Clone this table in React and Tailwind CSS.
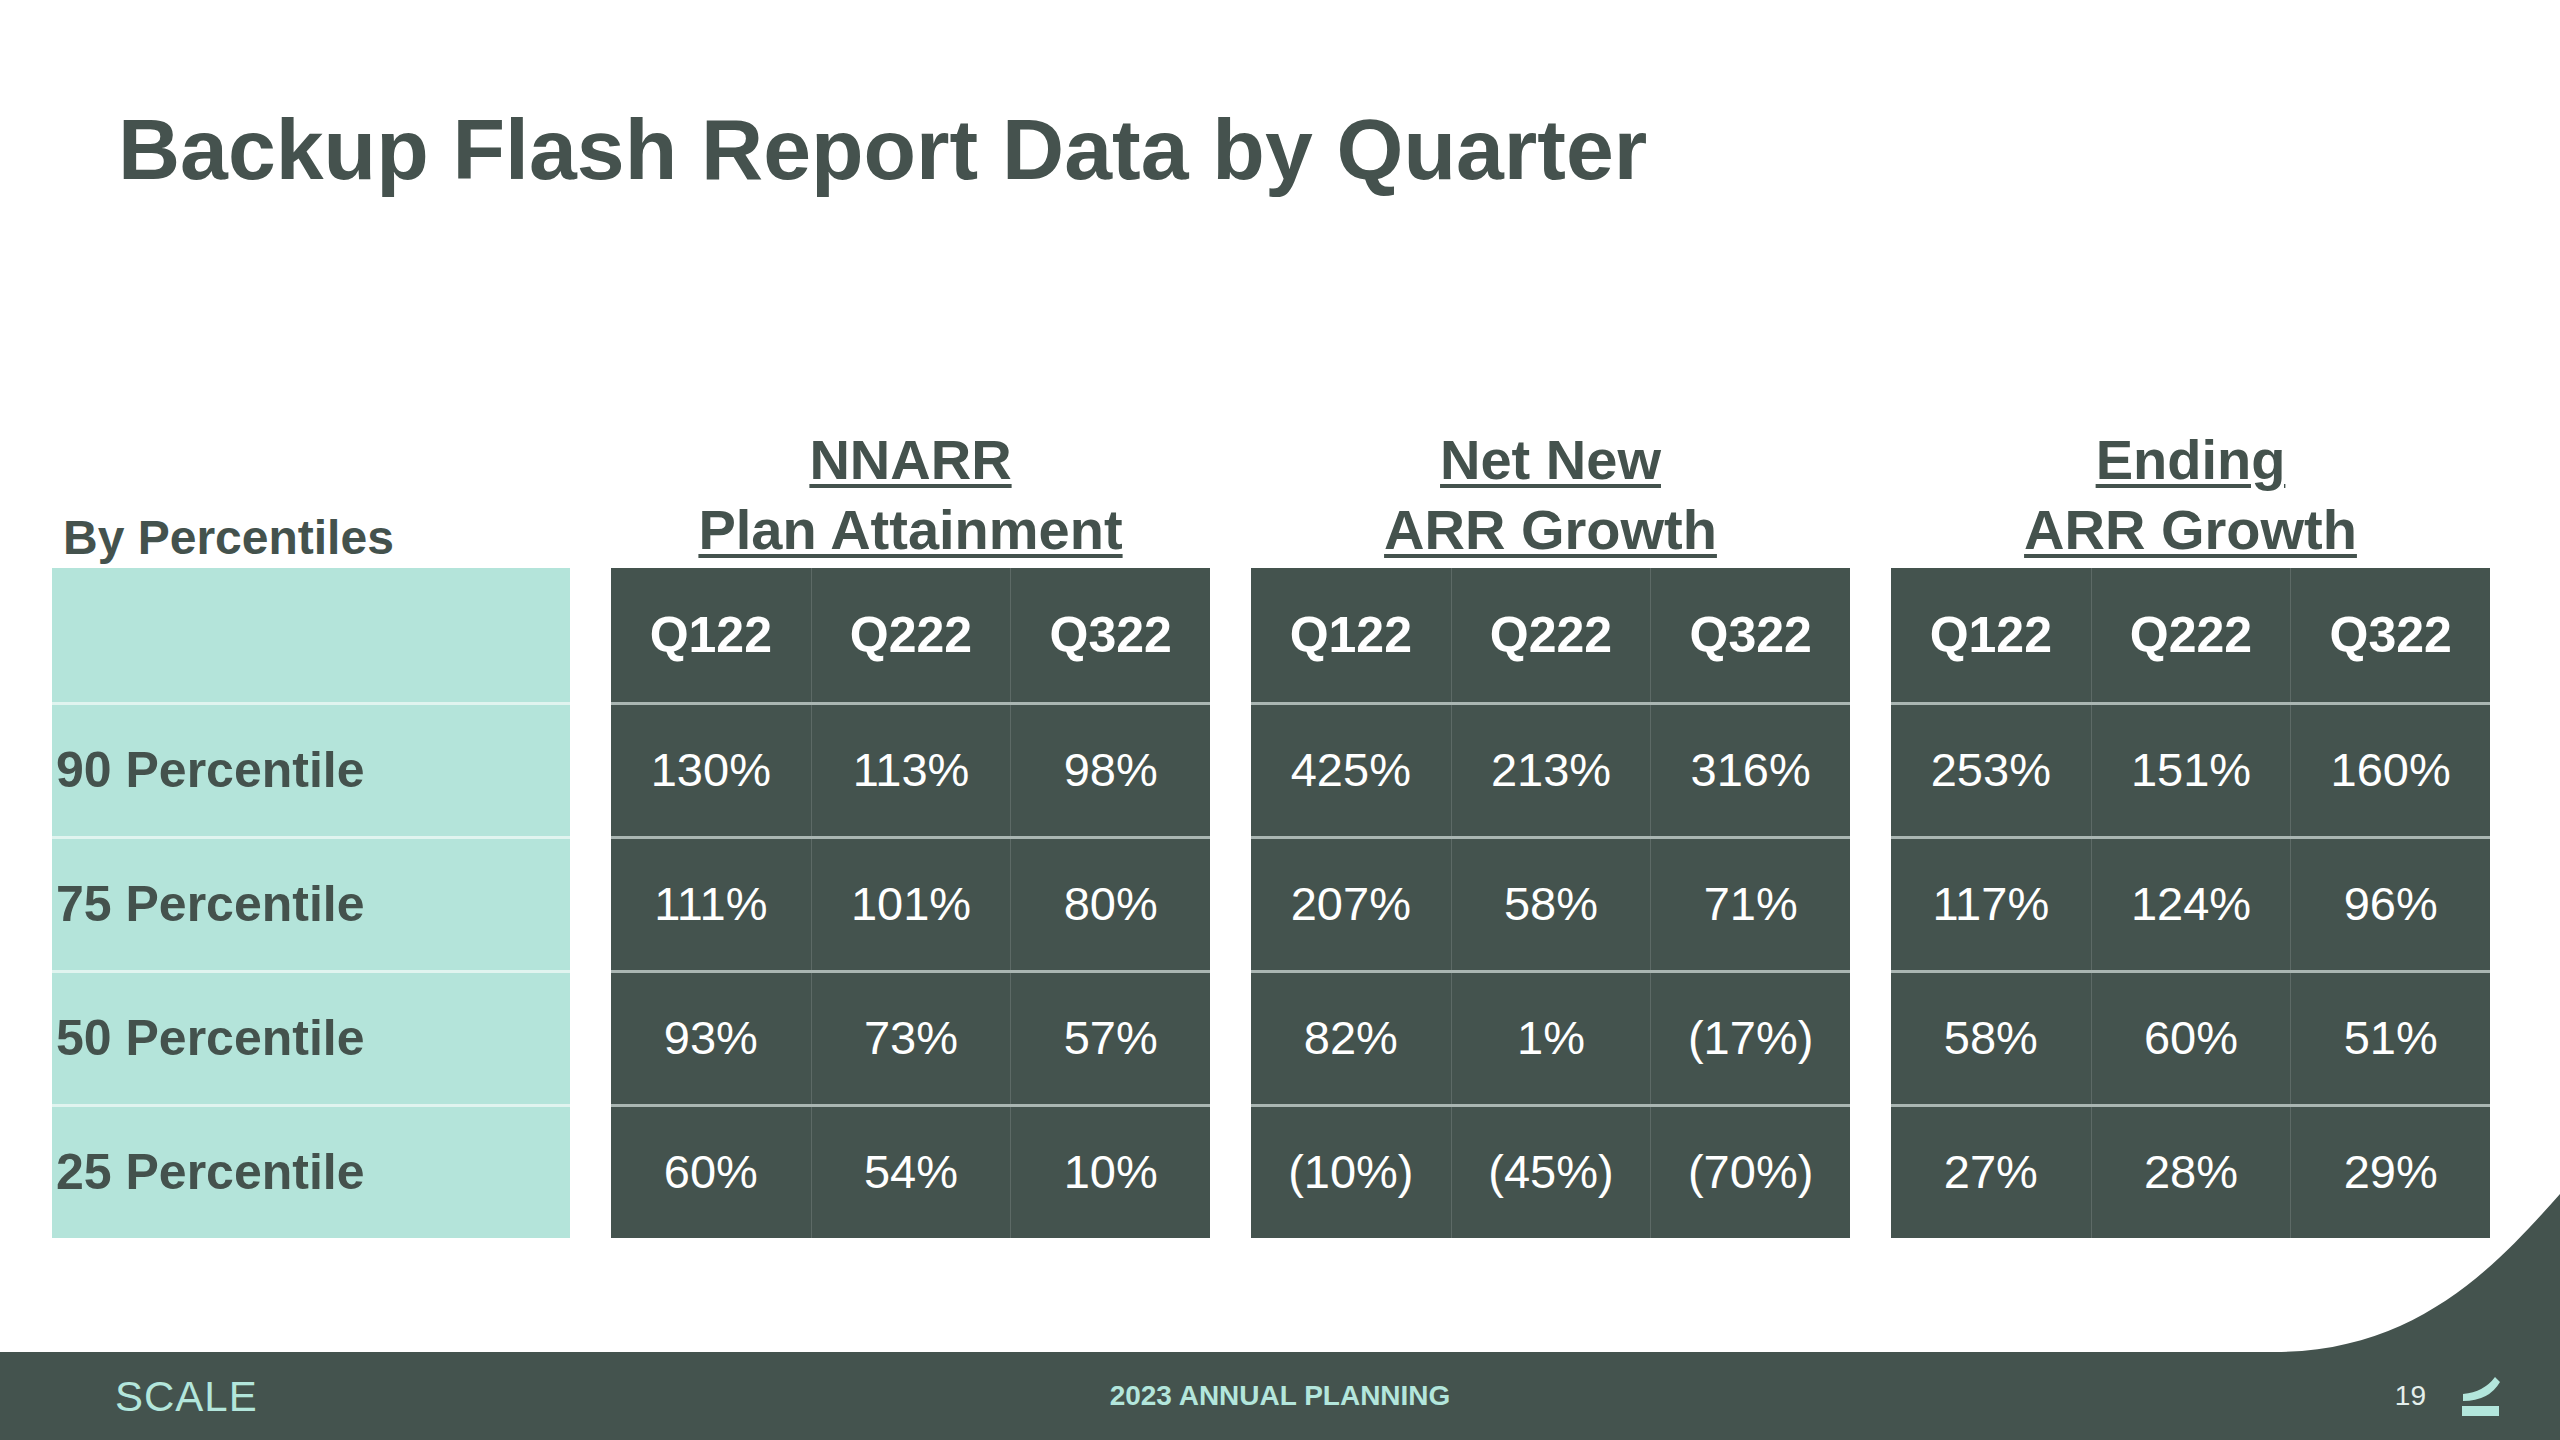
const DARK = "#44534e";

const GROUPS = [
  {
    title: ["NNARR", "Plan Attainment"],
    rows: [
      ["130%", "113%", "98%"],
      ["111%", "101%", "80%"],
      ["93%", "73%", "57%"],
      ["60%", "54%", "10%"],
    ],
  },
  {
    title: ["Net New", "ARR Growth"],
    rows: [
      ["425%", "213%", "316%"],
      ["207%", "58%", "71%"],
      ["82%", "1%", "(17%)"],
      ["(10%)", "(45%)", "(70%)"],
    ],
  },
  {
    title: ["Ending", "ARR Growth"],
    rows: [
      ["253%", "151%", "160%"],
      ["117%", "124%", "96%"],
      ["58%", "60%", "51%"],
      ["27%", "28%", "29%"],
    ],
  },
];

const QUARTERS = ["Q122", "Q222", "Q322"];
const LABELS = ["90 Percentile", "75 Percentile", "50 Percentile", "25 Percentile"];

function GroupHeader({ lines }) {
  return (
    <div className="flex h-[143px] flex-col items-center justify-end pb-[3px]">
      {lines.map((line) => (
        <div
          key={line}
          className="text-[56px] leading-[70px] font-bold text-[#44524d] underline decoration-[4px] underline-offset-[5px]"
        >
          {line}
        </div>
      ))}
    </div>
  );
}

function DataTable({ rows }) {
  return (
    <div className="bg-[#44534e] text-white">
      <div className="grid h-[134px] grid-cols-3">
        {QUARTERS.map((q, i) => (
          <div
            key={q}
            className={`flex items-center justify-center text-[50px] font-bold ${i > 0 ? "border-l border-[#5d6a66]" : ""}`}
          >
            {q}
          </div>
        ))}
      </div>
      {rows.map((row, r) => (
        <div key={r} className="grid h-[134px] grid-cols-3 border-t-[3px] border-[#aab6b2]">
          {row.map((v, i) => (
            <div
              key={i}
              className={`flex items-center justify-center text-[47px] ${i > 0 ? "border-l border-[#5d6a66]" : ""}`}
            >
              {v}
            </div>
          ))}
        </div>
      ))}
    </div>
  );
}

function Logo() {
  return (
    <svg width="38" height="40" viewBox="0 0 38 40" fill="#b3e6dc">
      <path d="M1 18 Q22 16 33 1 L38 6 Q27 25 1 25 Z" />
      <rect x="0" y="30" width="37" height="10" />
    </svg>
  );
}

export default function App() {
  return (
    <div className="flex h-[1440px] w-[2560px] flex-col overflow-hidden bg-white font-['Liberation_Sans',Arial,sans-serif]">
      <div className="relative flex-1">
        <h1 className="pt-[106px] pl-[118px] text-[86px] leading-none font-bold text-[#45524e]">
          Backup Flash Report Data by Quarter
        </h1>

        <div className="mt-[233px] grid grid-cols-[518px_599px_599px_599px] gap-x-[41px] pl-[52px]">
          <div>
            <div className="flex h-[143px] items-end pb-[1px] pl-[11px]">
              <span className="text-[48px] leading-[58px] font-bold text-[#44524d]">By Percentiles</span>
            </div>
            <div className="bg-[#b4e4da] text-[#44524d]">
              <div className="h-[134px]" />
              {LABELS.map((label) => (
                <div
                  key={label}
                  className="flex h-[134px] items-center border-t-[3px] border-[#e0f4ef] pl-[4px] text-[50px] font-bold"
                >
                  {label}
                </div>
              ))}
            </div>
          </div>

          {GROUPS.map((g) => (
            <div key={g.title.join(" ")}>
              <GroupHeader lines={g.title} />
              <DataTable rows={g.rows} />
            </div>
          ))}
        </div>

        <svg
          className="absolute right-0 bottom-0"
          width="300"
          height="171"
          viewBox="0 0 300 171"
        >
          <path d="M15 171 C160 171 240 80 300 13 L300 171 Z" fill={DARK} />
        </svg>
      </div>

      <footer className="grid h-[88px] grid-cols-3 items-center bg-[#44534e] text-[#b3e6dc]">
        <div className="pl-[115px] text-[42px] tracking-[1px]">SCALE</div>
        <div className="text-center text-[28px] font-bold">2023 ANNUAL PLANNING</div>
        <div className="flex items-center justify-end gap-[36px] pr-[60px]">
          <span className="text-[28px] text-[#e4efec]">19</span>
          <Logo />
        </div>
      </footer>
    </div>
  );
}
